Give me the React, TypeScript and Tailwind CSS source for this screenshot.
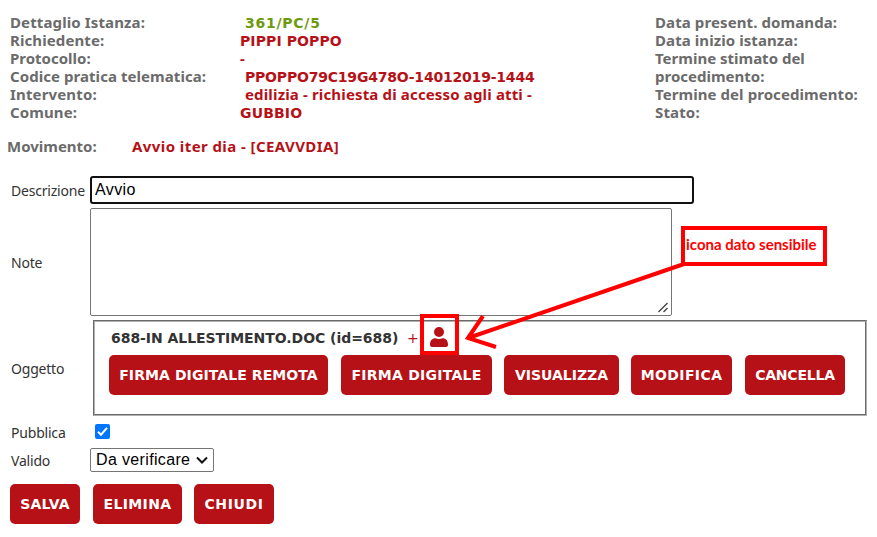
import type { ReactNode } from "react";

type DetailRow = { label: string; labelClass: string; value: string; valueClass: string };

const details: DetailRow[] = [
  { label: "Dettaglio Istanza:", labelClass: "tracking-[0.12px]", value: "361/PC/5", valueClass: "mt-px ml-[5px] font-['DejaVu_Sans',sans-serif] text-[14px] tracking-[0.75px] text-[#6c9a0c]" },
  { label: "Richiedente:", labelClass: "tracking-[0.1px]", value: "PIPPI POPPO", valueClass: "mt-px font-['DejaVu_Sans',sans-serif] text-[14px] tracking-[0.1px] text-[#b61117]" },
  { label: "Protocollo:", labelClass: "", value: "-", valueClass: "text-[#b61117]" },
  { label: "Codice pratica telematica:", labelClass: "tracking-[0.06px]", value: "PPOPPO79C19G478O-14012019-1444", valueClass: "mt-px ml-[5px] font-['DejaVu_Sans',sans-serif] text-[14px] tracking-[-0.2px] text-[#b61117]" },
  { label: "Intervento:", labelClass: "tracking-[0.15px]", value: "edilizia - richiesta di accesso agli atti -", valueClass: "ml-[5px] tracking-[0.15px] text-[#b61117]" },
  { label: "Comune:", labelClass: "tracking-[0.1px]", value: "GUBBIO", valueClass: "mt-px font-['DejaVu_Sans',sans-serif] text-[14px] tracking-[0.15px] text-[#b61117]" },
];

const dates = [
  { label: "Data present. domanda:", className: "tracking-[0.1px]" },
  { label: "Data inizio istanza:", className: "tracking-[0.08px]" },
  { label: "Termine stimato del", className: "" },
  { label: "procedimento:", className: "" },
  { label: "Termine del procedimento:", className: "tracking-[0.07px]" },
  { label: "Stato:", className: "tracking-[0.15px]" },
];

function Button({ children, className }: { children: ReactNode; className: string }) {
  return (
    <button
      className={`flex h-10 shrink-0 items-center justify-center rounded-[5px] bg-[#b61117] pt-px font-['DejaVu_Sans',sans-serif] text-[14px] font-bold whitespace-nowrap text-white ${className}`}
    >
      {children}
    </button>
  );
}

function Row({ label, className, children }: { label: string; className: string; children: ReactNode }) {
  return (
    <div className={`flex ${className}`}>
      <div className="flex w-[79px] shrink-0 items-center text-[14px] tracking-[-0.2px] text-[#333]">
        <span>{label}</span>
      </div>
      {children}
    </div>
  );
}

export default function App() {
  return (
    <div className="relative h-[537px] w-[877px] overflow-hidden bg-white font-['Noto_Sans',sans-serif] whitespace-nowrap">
      <header className="flex pt-[13px] pl-[10px] text-[15px] leading-[18px] font-bold text-[#6b6b6b]">
        <div className="w-[645px]">
          {details.map((row) => (
            <div key={row.label} className="flex h-[18px]">
              <div className={`w-[230px] shrink-0 ${row.labelClass}`}>{row.label}</div>
              <div className={row.valueClass}>{row.value}</div>
            </div>
          ))}
        </div>
        <div>
          {dates.map((row) => (
            <div key={row.label} className={`h-[18px] ${row.className}`}>
              {row.label}
            </div>
          ))}
        </div>
      </header>

      <div className="mt-4 flex h-[18px] pl-[7px] text-[15px] leading-[18px] font-bold text-[#6b6b6b]">
        <span className="w-[125px]">Movimento:</span>
        <span className="tracking-[0.42px] text-[#b61117]">Avvio iter dia - [CEAVVDIA]</span>
      </div>

      <main className="mt-[21px] pl-[11px]">
        <Row label="Descrizione" className="h-7">
          <input
            className="h-7 w-[604px] rounded-[3px] border-2 border-[#101010] px-[3px] font-['Liberation_Sans',sans-serif] text-[16px] tracking-[0.4px] text-black outline-none"
            defaultValue="Avvio"
          />
        </Row>
        <Row label="Note" className="mt-1 h-[108px]">
          <div className="flex h-[108px] w-[582px] items-end justify-end rounded-[2px] border border-[#767676] p-[2px]">
            <svg width="11" height="11" viewBox="0 0 11 11" fill="none" stroke="#444" strokeWidth="1.4">
              <path d="M0.5 10 9.5 1M5.5 10 9.5 6" />
            </svg>
          </div>
        </Row>
        <Row label="Oggetto" className="mt-1 h-24">
          <fieldset className="ml-[3px] h-24 w-[774px] border border-t-[#6b6b6b] border-r-[#b0b0b0] border-b-[#b0b0b0] border-l-[#6b6b6b]">
            <div className="h-full border border-t-[#b0b0b0] border-r-[#6b6b6b] border-b-[#6b6b6b] border-l-[#b0b0b0] pl-[14px]">
              <div className="flex h-[33px] items-center pb-px pl-[2px] font-['DejaVu_Sans',sans-serif] text-[14px] leading-[18px] font-bold text-[#333]">
                <span className="w-[296px] tracking-[-0.05px]">688-IN ALLESTIMENTO.DOC (id=688)</span>
                <span className="w-[23px] font-normal text-[#b61117]">+</span>
                <svg className="-mt-[3px]" width="18" height="20" viewBox="0 0 18 20" fill="#b61117">
                  <circle cx="9" cy="5" r="5" />
                  <path d="M0 17.2C0 13.5 2.3 11.2 5.3 11.2C6.6 11.7 7.8 12 9 12s2.4-.3 3.7-.8C15.7 11.2 18 13.5 18 17.2V18q0 2-2 2H2q-2 0-2-2Z" />
                </svg>
              </div>
              <div className="flex">
                <Button className="w-[219px] tracking-[0.08px]">FIRMA DIGITALE REMOTA</Button>
                <Button className="ml-[13px] w-[151px] tracking-[0.25px]">FIRMA DIGITALE</Button>
                <Button className="ml-3 w-[115px]">VISUALIZZA</Button>
                <Button className="ml-3 w-[101px] tracking-[0.4px]">MODIFICA</Button>
                <Button className="ml-[13px] w-[100px] tracking-[-0.2px]">CANCELLA</Button>
              </div>
            </div>
          </fieldset>
        </Row>
        <Row label="Pubblica" className="mt-[6px] h-[20px]">
          <div className="flex items-start pt-[2px] pl-[5px]">
            <div className="flex size-[15px] items-center justify-center rounded-[2px] bg-[#0075ff]">
              <svg width="11" height="11" viewBox="0 0 11 11" fill="none" stroke="white" strokeWidth="2">
                <path d="M1 5.8 4 8.7 10 1.8" />
              </svg>
            </div>
          </div>
        </Row>
        <Row label="Valido" className="mt-[6px] h-6">
          <div className="flex h-6 w-[124px] items-center rounded-[2px] border border-[#767676] pl-[5px] font-['Liberation_Sans',sans-serif] text-[16px] text-black">
            <span className="w-[100px] tracking-[0.35px]">Da verificare</span>
            <svg width="12" height="8" viewBox="0 0 12 8" fill="none" stroke="#111" strokeWidth="2">
              <path d="M1 1.5 6 6.5 11 1.5" />
            </svg>
          </div>
        </Row>
        <div className="mt-3 -ml-px flex">
          <Button className="w-[70px] tracking-[0.2px]">SALVA</Button>
          <Button className="ml-[13px] w-[89px] tracking-[0.35px]">ELIMINA</Button>
          <Button className="ml-3 w-20 tracking-[0.6px]">CHIUDI</Button>
        </div>
      </main>

      <div className="absolute top-[226px] left-[681px] flex h-10 w-[146px] items-center border-4 border-[#f00] pb-[3px] pl-px font-['Lato',sans-serif] text-[15px] font-bold text-[#f00]">
        <span>icona dato sensibile</span>
      </div>
      <div className="absolute top-[314px] left-[420px] h-[41px] w-[39px] border-4 border-[#f00]" />
      <svg className="absolute top-[255px] left-[460px]" width="230" height="100" fill="none" stroke="#f00" strokeWidth="4">
        <path d="M224 9 8 83M23 61 8 83 36 92" />
      </svg>
    </div>
  );
}
